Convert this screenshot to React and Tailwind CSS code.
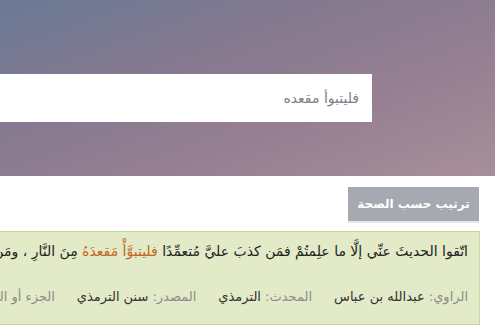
import React from "react";

const Field = ({ label, value }) => (
  <span className="whitespace-nowrap">
    <span className="text-[#8c8c8c]">{label}: </span>
    <span className="text-[#333]">{value}</span>
  </span>
);

export default function App() {
  return (
    <div
      dir="rtl"
      className="w-[495px] h-[331px] overflow-hidden bg-white font-['DejaVu_Sans','Noto_Sans',sans-serif]"
    >
      {/* hero */}
      <div className="h-[176px] pt-[74px] bg-[linear-gradient(160deg,#6a7a96_0%,#85798f_35%,#967f92_65%,#a78f99_100%)]">
        <div className="mr-[123px] w-[520px] h-[48px] bg-white flex items-center pr-[13px]">
          <span className="text-[14px] text-[#7c8089]">فليتبوأ مقعده</span>
        </div>
      </div>

      {/* sort button */}
      <div className="pt-[11px] pr-[16px] flex">
        <button
          type="button"
          className="h-[34px] w-[131px] bg-[#a5aab0] text-white font-bold text-[12px] whitespace-nowrap border-b-2 border-[#e6e6e6] box-content"
        >
          ترتيب حسب الصحة
        </button>
      </div>

      {/* result */}
      <div className="mt-[8px] mr-[15px] w-[560px] h-[94px] border border-[#c7d89b] bg-[#e2eac7] pr-[11px] pt-[8px]">
        <p className="whitespace-nowrap text-[14px] leading-[22px] text-[#222]">
          اتّقوا الحديثَ عنِّي إلَّا ما علِمتُمْ فمَن كذبَ عليَّ مُتعمِّدًا{" "}
          <span className="text-[#c4661b]">فليتبوَّأْ مَقعدَهُ</span> مِنَ النَّارِ ، ومَن قالَ في القرآنِ برأيِهِ
        </p>
        <div className="mt-[25px] flex gap-[22px] text-[13px] leading-[20px]">
          <Field label="الراوي" value="عبدالله بن عباس" />
          <Field label="المحدث" value="الترمذي" />
          <Field label="المصدر" value="سنن الترمذي" />
          <Field label="الجزء أو الصفحة" value="2951" />
        </div>
      </div>
    </div>
  );
}
